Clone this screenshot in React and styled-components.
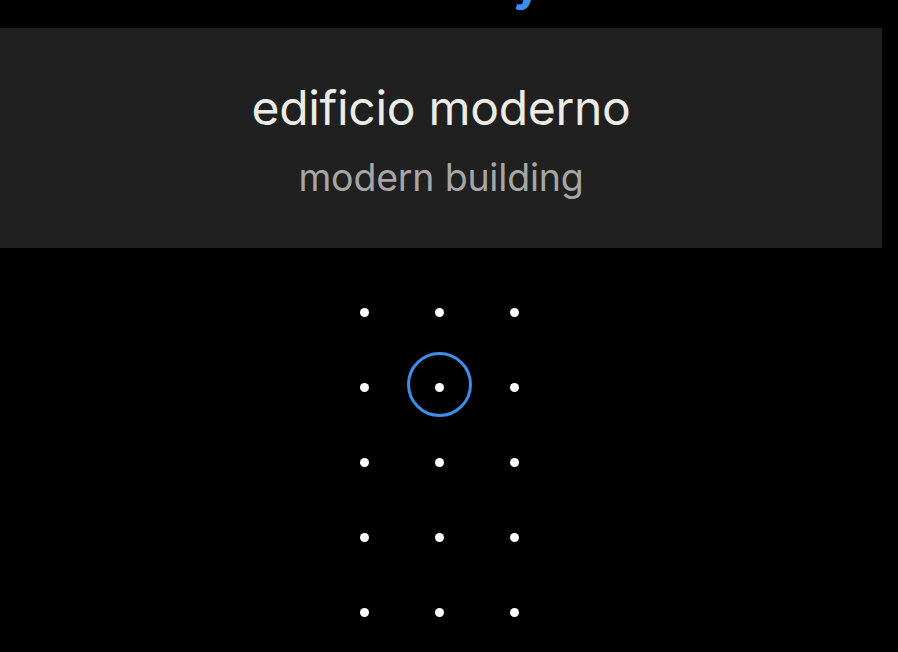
import React from 'react'
import styled, { createGlobalStyle } from 'styled-components'

const Global = createGlobalStyle`
    html, body {
        margin: 0;
        padding: 0;
        background: #000;
    }
    body {
        font-family: Inter, "Noto Sans", "Liberation Sans", sans-serif;
        overflow: hidden;
    }
`

const Page = styled.div`
    width: 898px;
    height: 652px;
    background: #000;
    display: flex;
    flex-direction: column;
    overflow: hidden;
`

const TopStrip = styled.div`
    height: 28px;
    width: 814px;
    overflow: hidden;
    display: flex;
    justify-content: center;
`

const Heading = styled.h1`
    margin: -45px 0 0 0;
    font-size: 48px;
    font-weight: 700;
    line-height: 56px;
    color: #3b8fea;
    white-space: nowrap;
`

const Card = styled.div`
    width: 882px;
    height: 220px;
    background: #202020;
    display: flex;
    flex-direction: column;
    align-items: center;
    padding-top: 52px;
    box-sizing: border-box;
`

const Word = styled.div`
    font-size: 48px;
    color: #ecebe6;
    line-height: 56px;
    letter-spacing: -0.3px;
`

const Translation = styled.div`
    margin-top: 20px;
    font-size: 37.5px;
    color: #a6a6a6;
    line-height: 44px;
    letter-spacing: -0.2px;
`

const Grid = styled.div`
    margin-top: 27px;
    width: 879px;
    display: grid;
    grid-template-columns: repeat(3, 75px);
    grid-auto-rows: 75px;
    justify-content: center;
`

const Cell = styled.div`
    position: relative;
    display: flex;
    align-items: center;
    justify-content: center;
`

const Dot = styled.span`
    width: 9px;
    height: 9px;
    border-radius: 50%;
    background: #fff;
`

const Ring = styled.span`
    position: absolute;
    left: 50%;
    top: 50%;
    width: 59px;
    height: 59px;
    margin: -36px 0 0 -33px;
    border: 3.5px solid #3b8fea;
    border-radius: 50%;
`

const cells = Array.from({ length: 15 }, (_, i) => i)

export default function App() {
    return (
        <Page>
            <Global />
            <TopStrip>
                <Heading>Vocabulary</Heading>
            </TopStrip>
            <Card>
                <Word>edificio moderno</Word>
                <Translation>modern building</Translation>
            </Card>
            <Grid>
                {cells.map(i => (
                    <Cell key={i}>
                        <Dot />
                        {i === 4 && <Ring />}
                    </Cell>
                ))}
            </Grid>
        </Page>
    )
}
